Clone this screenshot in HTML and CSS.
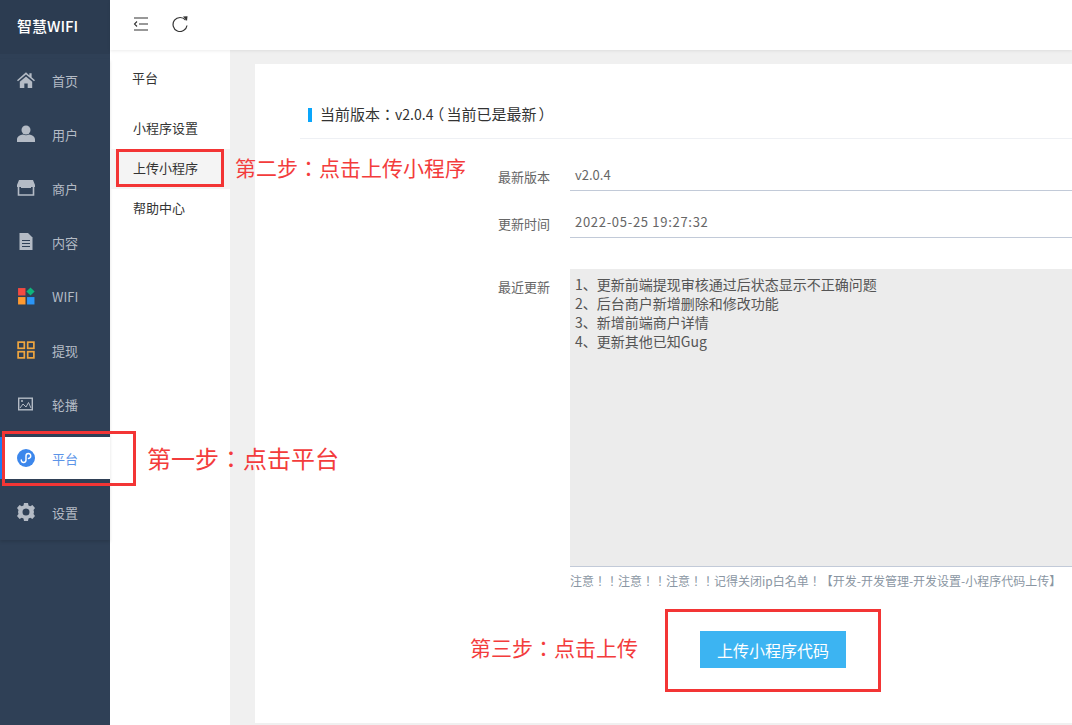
FILE: index.html
```html
<!DOCTYPE html>
<html lang="zh-Hans">
<head>
<meta charset="utf-8">
<title>智慧WIFI</title>
<link rel="stylesheet" href="styles.css">
</head>
<body>
<div class="app">
  <aside class="sidebar">
    <div class="logo">智慧WIFI</div>
    <nav class="menu">
      <a class="item"><svg class="ico" viewBox="0 0 16 16"><path fill="#b4bbc5" d="M8 1 0 8.200l.9 1L8 3l7.100 6.200.9-1-3-2.600V2h-2v1.900zM2.500 9.600V15h4v-4h3v4h4V9.600L8 4.800z"/></svg><span>首页</span></a>
      <a class="item"><svg class="ico" viewBox="0 0 18 18"><circle fill="#b4bbc5" cx="9" cy="5" r="4.500"/><path fill="#b4bbc5" d="M0 17v-2.500C0 11.500 3 10 6 9.500c2 1 4 1 6 0 3 .5 6 2 6 5V17z"/></svg><span>用户</span></a>
      <a class="item"><svg class="ico" viewBox="0 0 18 16"><path fill="#b4bbc5" d="M2 0h14l2 5v2H0V5z"/><path fill="none" stroke="#b4bbc5" stroke-width="1.600" d="M1.500 7v8h15V7"/><path fill="#b4bbc5" d="M4 6h10v2H4z"/></svg><span>商户</span></a>
      <a class="item"><svg class="ico" viewBox="0 0 16 18"><path fill="#b4bbc5" d="M1.500 0H10l4.500 4.500V17H1.500z"/><path fill="#2f4056" d="M4 7h8v1H4zM4 10h8v1H4zM4 13h8v1H4z"/></svg><span>内容</span></a>
      <a class="item"><svg class="ico" viewBox="0 0 17 17"><rect fill="#f44a41" x="1" y="1" width="7" height="7"/><rect fill="#0fb47c" x="10" y="1.500" width="5.500" height="5.500" transform="rotate(45 12.750 4.250)"/><rect fill="#ff9a30" x="1" y="9.500" width="7" height="7"/><rect fill="#2b95f6" x="9.500" y="9.500" width="7" height="7"/></svg><span>WIFI</span></a>
      <a class="item"><svg class="ico" viewBox="0 0 16 16"><g fill="none" stroke="#f0a63f" stroke-width="1.500"><rect x="1" y="1" width="5.500" height="5.500"/><rect x="9.500" y="1" width="5.500" height="5.500"/><rect x="1" y="9.500" width="5.500" height="5.500"/><rect x="9.500" y="9.500" width="5.500" height="5.500"/></g></svg><span>提现</span></a>
      <a class="item"><svg class="ico" viewBox="0 0 18 16"><rect fill="none" stroke="#b4bbc5" stroke-width="1.400" x="1.700" y="2.200" width="13.600" height="11.600"/><path fill="none" stroke="#b4bbc5" d="m3 12 3-4 3 3 2.500-4.500L14 12"/><circle fill="#b4bbc5" cx="5" cy="5" r="1"/></svg><span>轮播</span></a>
      <a class="item active"><svg class="ico" viewBox="0 0 16 16"><circle fill="#3c87ec" cx="8" cy="8" r="8"/><path fill="none" stroke="#fff" stroke-width="1.300" stroke-linecap="round" d="M3.800 9.800c0 3 4.200 2.800 4.200 0V6.200c0-2.800 4.200-3 4.200 0 0 1.500-1 2-2 2.200"/></svg><span>平台</span></a>
      <a class="item"><svg class="ico" viewBox="0 0 18 18"><path fill="#b4bbc5" fill-rule="evenodd" d="M7 0h4l.5 2.500 1.800.8L15.400 2 18 5l-1.500 2 .5 2-.5 2 1.500 2-2.600 3-2.100-1.300-1.800.8L11 18H7l-.5-2.500-1.800-.8L2.600 16 0 13l1.500-2L1 9l.5-2L0 5l2.600-3 2.100 1.300 1.800-.8zM9 5.500a3.500 3.500 0 1 0 0 7 3.500 3.500 0 0 0 0-7z"/></svg><span>设置</span></a>
    </nav>
  </aside>
  <div class="main">
    <header class="topbar">
      <svg class="tool" viewBox="0 0 16 14"><path fill="none" stroke="#333" stroke-width="1.100" d="M1 1h14M6 7h9M1 13h14M4 4.500 1.500 7 4 9.500"/></svg>
      <svg class="tool" viewBox="0 0 16 16"><path fill="none" stroke="#333" stroke-width="1.200" d="M13.600 4.200A7 7 0 1 0 15 9.500"/><path fill="#333" d="M11 .5 15.500.2 15 5z"/></svg>
    </header>
    <div class="body">
      <nav class="subnav">
        <div class="sub-title">平台</div>
        <a class="sub-item">小程序设置</a>
        <a class="sub-item current">上传小程序</a>
        <a class="sub-item">帮助中心</a>
      </nav>
      <section class="content">
        <div class="card">
          <h2 class="version"><span lang="zh-Hant">当前版本：</span><span class="ver-num">v2.0.4</span><span class="paren">（</span>当前已是最新<span class="paren">）</span></h2>
          <div class="field">
            <label class="field-label">最新版本</label>
            <div class="value">v2.0.4</div>
          </div>
          <div class="field">
            <label class="field-label">更新时间</label>
            <div class="value value-date">2022-05-25 19:27:32</div>
          </div>
          <div class="field notes-field">
            <label class="field-label">最近更新</label>
            <div class="notes">1、更新前端提现审核通过后状态显示不正确问题<br>2、后台商户新增删除和修改功能<br>3、新增前端商户详情<br>4、更新其他已知Gug</div>
          </div>
          <p class="hint" lang="zh-Hant">注意！！注意！！注意！！记得关闭ip白名单！【开发-开发管理-开发设置-小程序代码上传】</p>
          <button class="upload">上传小程序代码</button>
        </div>
      </section>
    </div>
  </div>
</div>
<div class="mark mark-platform"></div>
<div class="mark mark-sub"></div>
<div class="mark mark-upload"></div>
<div class="note note-1" lang="zh-Hant">第一步：点击平台</div>
<div class="note note-2" lang="zh-Hant">第二步：点击上传小程序</div>
<div class="note note-3" lang="zh-Hant">第三步：点击上传</div>
</body>
</html>
```

FILE: styles.css
```css
* { box-sizing: border-box; }
html, body { margin: 0; height: 100%; overflow: hidden; }
body {
  position: relative;
  font-family: "Noto Sans CJK SC", "Noto Sans", sans-serif;
  font-size: 13px;
  color: #333;
  background: #fff;
  text-spacing-trim: space-all;
}
.app { display: flex; height: 725px; width: 1072px; overflow: hidden; }

.sidebar { width: 110px; flex: none; background: #2f4056; }
.logo {
  height: 54px;
  padding-left: 17px;
  line-height: 52px;
  font-size: 15px;
  font-weight: 500;
  color: #fff;
  background: #2c3c51;
  white-space: nowrap;
}
.menu { box-shadow: 0 2px 3px rgba(0, 0, 0, .12); padding-bottom: 7px; }
.item {
  display: flex;
  align-items: center;
  height: 42px;
  margin-top: 12px;
  padding-left: 17px;
  color: #b4bbc5;
}
.item:first-child { margin-top: 5px; }
.item span { margin-left: 17px; }
.ico { width: 18px; height: 18px; flex: none; }
.item.active {
  background: #fff;
  color: #5b94e8;
  border-left: 2px solid #1e7cf0;
  padding-left: 15px;
}

.main { flex: 1; min-width: 0; display: flex; flex-direction: column; }
.topbar {
  height: 50px;
  flex: none;
  display: flex;
  align-items: center;
  gap: 23px;
  padding: 0 0 3px 23px;
  box-shadow: 0 1px 3px rgba(0, 0, 0, .08);
  position: relative;
}
.tool { width: 16px; height: 16px; }
.body { flex: 1; display: flex; min-height: 0; }

.subnav { width: 120px; flex: none; padding-top: 9px; }
.sub-title { height: 40px; line-height: 38px; padding-left: 22px; margin-bottom: 10px; color: #333; }
.sub-item { display: block; height: 40px; line-height: 38px; padding-left: 23px; color: #333; }
.sub-item.current { background: #f4f4f4; }

.content { flex: 1; min-width: 0; background: #f0f0f0; padding: 14px 0 2px 25px; }
.card { height: 100%; width: 900px; background: #fff; padding: 32px 0 0 45px; }
.version {
  margin: 0;
  height: 43px;
  padding-left: 20px;
  font-family: "Noto Sans CJK TC", "Noto Sans CJK SC", sans-serif;
  font-size: 15px;
  font-weight: 400;
  line-height: 36px;
  color: #333;
  border-bottom: 1px solid #eef0f4;
  position: relative;
  white-space: nowrap;
}
.ver-num { font-size: 14px; }
.paren {
  display: inline-block;
  width: 13px;
  text-align: center;
  font-feature-settings: "palt";
}
.version::before {
  content: "";
  position: absolute;
  left: 8px;
  top: 12px;
  width: 4px;
  height: 14px;
  background: #0aa6fb;
}
.field { display: flex; height: 47px; }
.version + .field { margin-top: 17px; }
.field-label { width: 270px; padding: 11px 20px 0 0; flex: none; text-align: right; color: #666; line-height: 20px; }
.value {
  flex: 1;
  height: 35px;
  padding: 4px 5px 0;
  line-height: 30px;
  color: #666;
  border-bottom: 1px solid #c2cad8;
}
.value-date { letter-spacing: .7px; }
.notes-field { height: auto; margin-top: 19px; }
.notes-field .field-label { padding-top: 8px; }
.notes {
  flex: 1;
  height: 298px;
  padding: 6px 5px;
  font-size: 14px;
  line-height: 19px;
  color: #555;
  background: #ececec;
  border-bottom: 1px solid #c2cad8;
}
.hint {
  margin: 4px 0 0 270px;
  font-family: "Noto Sans CJK TC", "Noto Sans CJK SC", sans-serif;
  line-height: 20px;
  font-size: 12px;
  color: #8a96a3;
  white-space: nowrap;
}
.upload {
  display: block;
  margin: 40px 0 0 400px;
  width: 146px;
  height: 37px;
  border: 0;
  padding: 0;
  background: #3cb4f2;
  color: #fff;
  font: 16px "Noto Sans CJK SC", "Noto Sans", sans-serif;
}

.mark { position: absolute; border: 3px solid #f33535; }
.mark-platform { left: 2px; top: 431px; width: 134px; height: 55px; }
.mark-sub { left: 116px; top: 149px; width: 108px; height: 38px; }
.mark-upload { left: 665px; top: 609px; width: 216px; height: 83px; }
.note {
  position: absolute;
  font-family: "Noto Sans CJK TC", "Noto Sans CJK SC", sans-serif;
  color: #f33c3c;
  white-space: nowrap;
}
.note-1 { left: 147px; top: 440px; font-size: 24px; line-height: 36px; }
.note-2 { left: 235px; top: 149px; font-size: 21px; line-height: 36px; }
.note-3 { left: 470px; top: 629px; font-size: 21px; line-height: 36px; }
```
